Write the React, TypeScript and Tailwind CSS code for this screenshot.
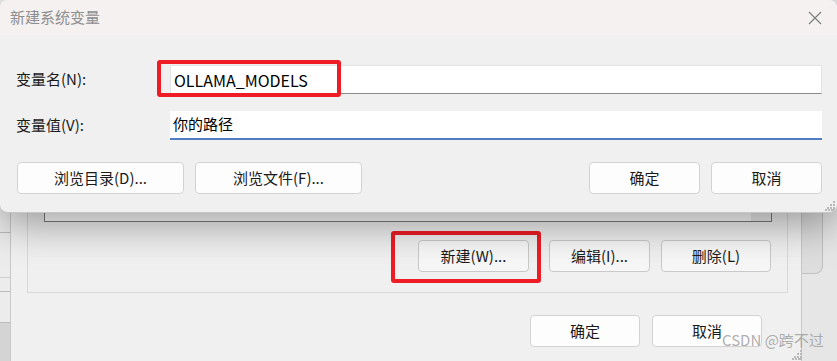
import React from "react";

const font = { fontFamily: '"Noto Sans CJK SC", "Noto Sans", sans-serif' };

function Grip({ className }: { className: string }) {
    // resize grip dots in the corner
    return (
        <svg className={className} width="10" height="10" viewBox="0 0 10 10">
            {[
                [8, 0],
                [5, 3],
                [8, 3],
                [2, 6],
                [5, 6],
                [8, 6],
                [0, 8],
                [3, 8],
                [6, 8],
                [8, 8],
            ].map(([x, y], i) => (
                <rect key={i} x={x} y={y} width="2" height="2" fill="#b8b8b8" />
            ))}
        </svg>
    );
}

function Btn({ label, w, light = false }: { label: string; w: string; light?: boolean }) {
    return (
        <button
            className={`${w} h-[32px] rounded-[4px] border text-[15px] text-[#1a1a1a] flex items-center justify-center ${
                light ? "bg-[#fdfdfd] border-[#d3d3d3]" : "bg-[#f7f7f7] border-[#c9c9c9]"
            }`}
        >
            {label}
        </button>
    );
}

export default function App() {
    return (
        <div className="relative w-[837px] h-[361px] overflow-hidden bg-[#e6e6e6]" style={font}>
            {/* window far behind, right side */}
            <div className="absolute left-[760px] top-0 w-[63px] h-[274px] rounded-br-[8px] bg-[#dedede] border-r border-b border-[#c0c0c0]" />

            {/* left strip of another window */}
            <div className="absolute left-0 top-0 w-[10px] h-full bg-[#ececec] flex flex-col">
                <div className="h-[233px] border-b border-[#bcbcbc]" />
                <div className="h-[45px] border-b border-[#d0d0d0]" />
                <div className="h-[14px] border-b border-[#bcbcbc]" />
                <div className="h-[31px] border-b border-[#bcbcbc]" />
                <div className="flex-1 bg-[#d4d4d4]" />
            </div>

            {/* environment variables dialog */}
            <div className="absolute left-[10px] top-0 w-[792px] h-[380px] bg-[#f0f0f0] border-l border-r border-[#c8c8c8] pl-[16px] pt-[100px]">
                <div className="w-[761px] h-[193px] border border-[#d8d8d8] pl-[16px] pr-[16px] flex flex-col">
                    <div className="w-[728px] h-[121px] bg-white border-l border-r border-b border-[#7c7c7c] flex justify-end">
                        <div className="w-[20px] h-full bg-[#ececec]" />
                    </div>
                    <div className="mt-[18px] flex justify-end">
                        <div className="flex">
                            <Btn label="新建(W)..." w="w-[111px]" />
                            <div className="ml-[20px]">
                                <Btn label="编辑(I)..." w="w-[101px]" />
                            </div>
                            <div className="ml-[11px]">
                                <Btn label="删除(L)" w="w-[110px]" />
                            </div>
                        </div>
                    </div>
                </div>
                <div className="mt-[22px] flex justify-end pr-[39px] gap-[12px]">
                    <Btn label="确定" w="w-[110px]" light />
                    <Btn label="取消" w="w-[110px]" light />
                </div>
                <Grip className="absolute left-[781px] top-[350px]" />
            </div>

            {/* red highlight on 新建 */}
            <div className="absolute left-[391px] top-[231px] w-[150px] h-[52px] border-[4px] border-[#ee1c25] rounded-[3px]" />

            {/* new system variable dialog */}
            <div className="absolute left-0 top-0 w-[837px] h-[213px] rounded-[8px] bg-[#f0f0f0] overflow-hidden shadow-[0_12px_40px_rgba(0,0,0,0.36)] border-b border-[#c6c6c6]">
                <div className="h-[35px] bg-[#f4f1f0] flex items-center justify-between pl-[10px] pr-[14px]">
                    <span className="text-[15px] text-[#8e8e8e]">新建系统变量</span>
                    <svg width="14" height="14" viewBox="0 0 14 14" className="mr-[1px]">
                        <path d="M1 1L13 13M13 1L1 13" stroke="#7a7a7a" strokeWidth="1.1" />
                    </svg>
                </div>
                <div className="pt-[30px] pl-[16px] pr-[15px]">
                    <div className="flex items-center h-[29px]">
                        <span className="w-[154px] text-[15px] text-[#1a1a1a]">变量名(N):</span>
                        <div className="flex-1 h-full bg-white border border-[#e3e3e3] border-b-[#8a8a8a] flex items-center pl-[3px] text-[16px] text-black">
                            OLLAMA_MODELS
                        </div>
                    </div>
                    <div className="flex items-center h-[29px] mt-[17px]">
                        <span className="w-[154px] text-[15px] text-[#1a1a1a]">变量值(V):</span>
                        <div className="flex-1 h-full bg-white border-b-2 border-[#4f7dc0] flex items-center pl-[3px] text-[15px] text-black">
                            你的路径
                        </div>
                    </div>
                    <div className="mt-[22px] flex items-center pl-[1px]">
                        <Btn label="浏览目录(D)..." w="w-[167px]" light />
                        <div className="ml-[11px]">
                            <Btn label="浏览文件(F)..." w="w-[167px]" light />
                        </div>
                        <div className="ml-auto flex gap-[11px]">
                            <Btn label="确定" w="w-[111px]" light />
                            <Btn label="取消" w="w-[111px]" light />
                        </div>
                    </div>
                </div>
                <Grip className="absolute right-[2px] bottom-[1px]" />
                {/* red highlight on variable name */}
                <div className="absolute left-[157px] top-[60px] w-[184px] h-[37px] border-[4px] border-[#ee1c25] rounded-[3px]" />
            </div>

            {/* watermark */}
            <div className="absolute left-[722px] top-[329px] text-[15px] text-[#9a9a9a]/80">
                CSDN @跨不过
            </div>
        </div>
    );
}
